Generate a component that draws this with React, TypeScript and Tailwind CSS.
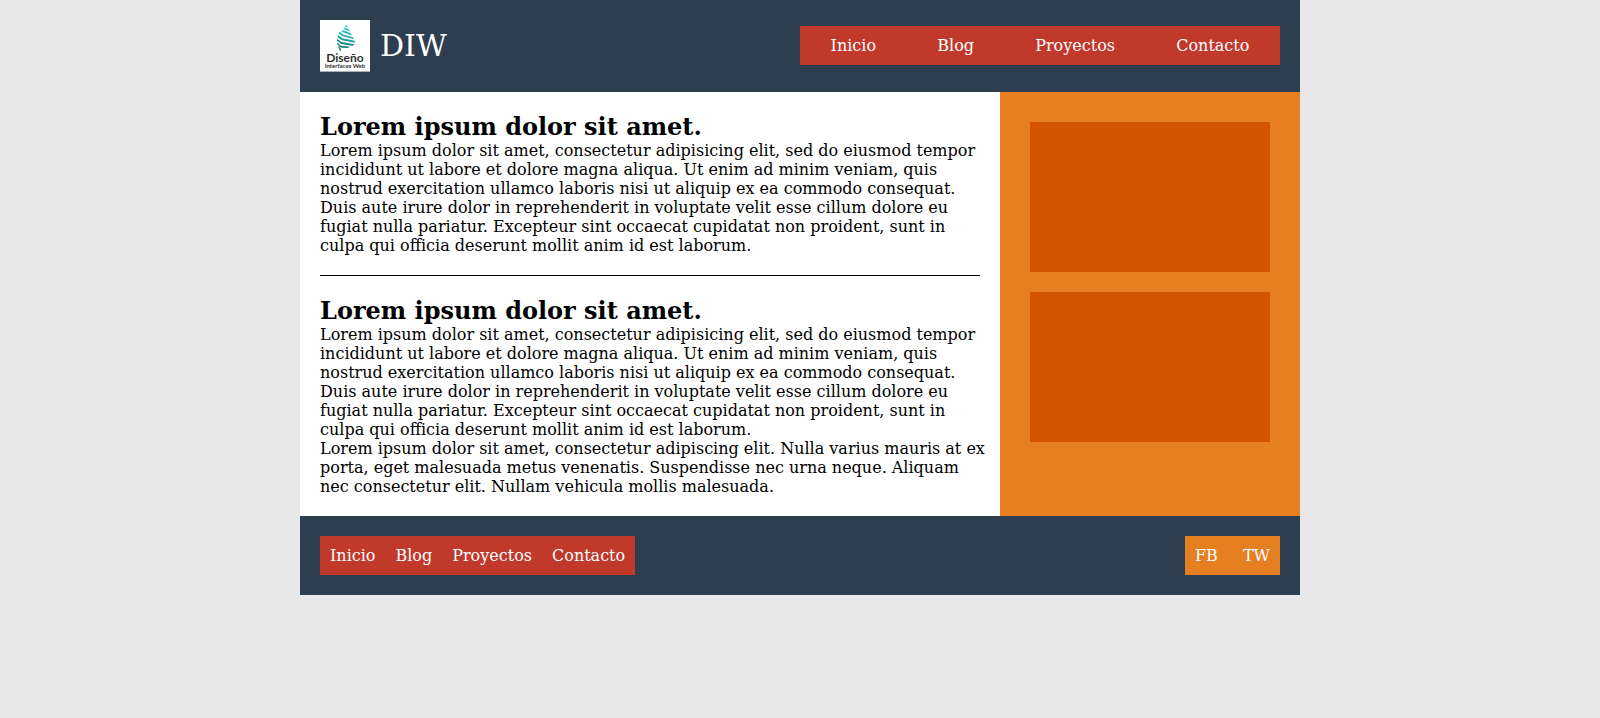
const LOREM =
  "Lorem ipsum dolor sit amet, consectetur adipisicing elit, sed do eiusmod tempor incididunt ut labore et dolore magna aliqua. Ut enim ad minim veniam, quis nostrud exercitation ullamco laboris nisi ut aliquip ex ea commodo consequat. Duis aute irure dolor in reprehenderit in voluptate velit esse cillum dolore eu fugiat nulla pariatur. Excepteur sint occaecat cupidatat non proident, sunt in culpa qui officia deserunt mollit anim id est laborum.";

const LINKS = ["Inicio", "Blog", "Proyectos", "Contacto"];

function Logo() {
  return (
    <svg viewBox="0 0 50 51.6" className="h-auto w-[50px] shrink-0" role="img" aria-label="Diseño Interfaces Web">
      <defs>
        <linearGradient id="leaf" gradientUnits="userSpaceOnUse" x1="28" y1="5" x2="22" y2="31">
          <stop offset="0" stopColor="#3ad9d2" />
          <stop offset="0.5" stopColor="#22aaa2" />
          <stop offset="1" stopColor="#0b5f5c" />
        </linearGradient>
      </defs>
      <rect width="50" height="51.6" fill="#fff" />
      <g fill="url(#leaf)">
        <path d="M26.4 4.6 L28 7.6 L25 6.6 Z" />
        <path d="M24.4 7.2 L28.8 9 L30 11.4 L23.4 8.8 Z" />
        <path d="M22.6 10 L30.9 13.2 L32 15.4 L21.4 11.8 Z" />
        <path d="M19.4 11.4 L23.2 14.4 L33 17.2 L34 19.2 L22.8 16.2 L18.6 13.4 Z" />
        <path d="M18 15 L22.4 18.2 L34.8 20.8 L34.8 22.8 L22 20.2 L17.4 17.2 Z" />
        <path d="M17 18.8 L21.6 22 L34.8 24.2 L32.4 25.8 L21.2 24 L16.8 20.8 Z" />
        <path d="M16.8 22.2 L20.8 25.8 L30.6 26.8 L27.2 28 L20.4 27.6 L17.4 24.4 Z" />
        <path d="M18 26 L20.6 28.6 L21 31 L19.8 30.4 Z" />
      </g>
      <g fill="#303030" className="[font-family:Lato,sans-serif]" textAnchor="middle">
        <text x="25" y="42" fontSize="12" fontWeight="700">Diseño</text>
        <text x="25" y="48" fontSize="6" fontWeight="700">Interfaces Web</text>
      </g>
    </svg>
  );
}

function NavLinks() {
  return (
    <>
      {LINKS.map((label) => (
        <li key={label} className="px-[10px]">
          <a href="#">{label}</a>
        </li>
      ))}
    </>
  );
}

export default function App() {
  return (
    <div className="min-h-screen bg-[#e8e8e8] text-[16px] leading-[19px] text-black [font-family:'DejaVu_Serif',serif]">
      <div className="mx-auto max-w-[1000px]">
        <header className="flex items-center justify-between bg-[#2c3e50] p-5 text-white">
          <div className="flex items-center gap-[10px]">
            <Logo />
            <h1 className="text-[30px] leading-[34px]">DIW</h1>
          </div>
          <nav aria-label="Principal" className="w-1/2 bg-[#c0392b] py-[10px]">
            <ul className="flex justify-around">
              <NavLinks />
            </ul>
          </nav>
        </header>

        <div className="flex">
          <main className="w-[70%] bg-white p-5">
            <article className="border-b border-black pb-5">
              <h2 className="text-[24px] leading-[29px] font-bold">Lorem ipsum dolor sit amet.</h2>
              <p className="-mr-[6px]">{LOREM}</p>
            </article>
            <article className="pt-5">
              <h2 className="text-[24px] leading-[29px] font-bold">Lorem ipsum dolor sit amet.</h2>
              <p className="-mr-[6px]">{LOREM}</p>
              <p className="-mr-[6px]">
                Lorem ipsum dolor sit amet, consectetur adipiscing elit. Nulla varius mauris at ex porta, eget malesuada
                metus venenatis. Suspendisse nec urna neque. Aliquam nec consectetur elit. Nullam vehicula mollis
                malesuada.
              </p>
            </article>
          </main>
          <aside className="flex w-[30%] flex-col gap-5 bg-[#e67e22] p-[30px]">
            <div className="h-[150px] bg-[#d35400]" />
            <div className="h-[150px] bg-[#d35400]" />
          </aside>
        </div>

        <footer className="flex items-center justify-between bg-[#2c3e50] p-5 text-white">
          <nav aria-label="Pie de página" className="bg-[#c0392b] py-[10px]">
            <ul className="flex">
              <NavLinks />
            </ul>
          </nav>
          <ul className="flex gap-[5px] bg-[#e67e22] py-[10px]">
            <li className="px-[10px]">
              <a href="#">FB</a>
            </li>
            <li className="px-[10px]">
              <a href="#">TW</a>
            </li>
          </ul>
        </footer>
      </div>
    </div>
  );
}
